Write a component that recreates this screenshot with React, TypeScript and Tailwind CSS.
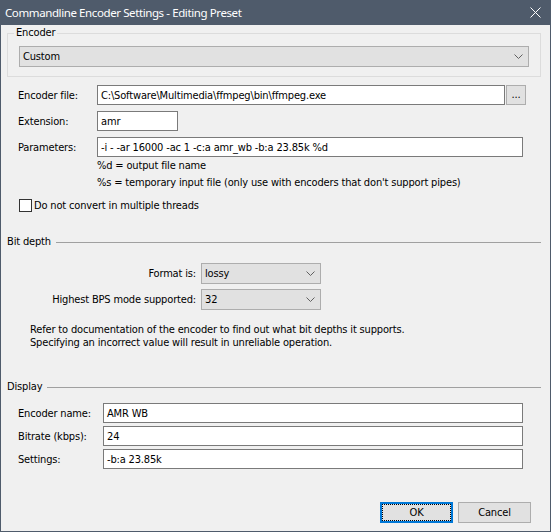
import React from "react";

function Chevron() {
  return (
    <svg width="9" height="5" viewBox="0 0 9 5" className="shrink-0">
      <polyline points="0.5,0.5 4.5,4.5 8.5,0.5" fill="none" stroke="#606060" strokeWidth="1" />
    </svg>
  );
}

function Combo({ value, className }: { value: string; className: string }) {
  return (
    <div className={"h-[21px] bg-[#e1e1e1] border border-[#adadad] flex items-center justify-between pl-[3px] pr-[5px] " + className}>
      <span>{value}</span>
      <Chevron />
    </div>
  );
}

function TextBox({ value, className }: { value: string; className: string }) {
  return (
    <div className={"h-[20px] bg-white border border-[#7a7a7a] flex items-center pl-[3px] whitespace-nowrap overflow-hidden " + className}>
      {value}
    </div>
  );
}

function Separator({ label, className }: { label: string; className: string }) {
  return (
    <div className={"h-[14px] flex items-center pl-[6px] mr-[9px] " + className}>
      <span className="leading-[14px]">{label}</span>
      <div className="flex-1 h-px bg-[#a0a0a0] ml-[5px]" />
    </div>
  );
}

export default function App() {
  return (
    <div className="w-[551px] h-[532px] bg-[#4f5b6b] px-px pb-px flex flex-col font-['DejaVu_Sans_Condensed','Liberation_Sans',sans-serif]">
      <div className="h-[25px] shrink-0 flex items-center justify-between pl-[4px] pr-[9px] text-white text-[11.5px] tracking-[-0.4px] font-['Noto_Sans','Liberation_Sans',sans-serif]">
        <span>Commandline Encoder Settings - Editing Preset</span>
        <svg width="11" height="11" viewBox="0 0 11 11">
          <line x1="0.5" y1="0.5" x2="10.5" y2="10.5" stroke="white" strokeWidth="1" />
          <line x1="10.5" y1="0.5" x2="0.5" y2="10.5" stroke="white" strokeWidth="1" />
        </svg>
      </div>
      <div className="flex-1 bg-[#f0f0f0] flex flex-col text-[11px] tracking-[-0.16px] text-black leading-[13px]">
        <fieldset className="ml-[6px] mt-[1px] w-[534px] border border-[#dcdcdc] p-0 m-0">
          <legend className="ml-[6px] px-[2px] leading-[14px]">Encoder</legend>
          <div className="px-[11px] pt-[6px] pb-[9px]">
            <Combo value="Custom" className="w-full" />
          </div>
        </fieldset>

        <div className="mt-[8px] flex items-center pl-[17px]">
          <span className="w-[79px]">Encoder file:</span>
          <TextBox value="C:\Software\Multimedia\ffmpeg\bin\ffmpeg.exe" className="w-[408px]" />
          <div className="ml-[1px] w-[20px] h-[20px] bg-[#e1e1e1] border border-[#adadad] flex items-center justify-center leading-none pb-[2px]">
            ...
          </div>
        </div>
        <div className="mt-[6px] flex items-center pl-[17px]">
          <span className="w-[79px]">Extension:</span>
          <TextBox value="amr" className="w-[81px]" />
        </div>
        <div className="mt-[6px] flex items-center pl-[17px]">
          <span className="w-[79px]">Parameters:</span>
          <TextBox value="-i - -ar 16000 -ac 1 -c:a amr_wb -b:a 23.85k %d" className="w-[426px]" />
        </div>
        <div className="ml-[96px] flex flex-col">
          <div className="h-[16px] flex items-center">%d = output file name</div>
          <div className="h-[16px] mt-[1px] flex items-center">
            %s = temporary input file (only use with encoders that don't support pipes)
          </div>
        </div>
        <div className="mt-[9px] flex items-center ml-[18px] h-[13px]">
          <div className="w-[13px] h-[13px] bg-white border border-[#333333]" />
          <span className="ml-[2px]">Do not convert in multiple threads</span>
        </div>

        <Separator label="Bit depth" className="mt-[23px]" />

        <div className="mt-[14px] flex items-center">
          <span className="w-[195px] text-right">Format is:</span>
          <Combo value="lossy" className="ml-[5px] w-[120px]" />
        </div>
        <div className="mt-[5px] flex items-center">
          <span className="w-[195px] text-right">Highest BPS mode supported:</span>
          <Combo value="32" className="ml-[5px] w-[120px]" />
        </div>
        <div className="mt-[13px] ml-[29px] flex flex-col">
          <span>Refer to documentation of the encoder to find out what bit depths it supports.</span>
          <span>Specifying an incorrect value will result in unreliable operation.</span>
        </div>

        <Separator label="Display" className="mt-[31px]" />

        <div className="mt-[9px] flex items-center pl-[17px]">
          <span className="w-[85px]">Encoder name:</span>
          <TextBox value="AMR WB" className="w-[420px]" />
        </div>
        <div className="mt-[3px] flex items-center pl-[17px]">
          <span className="w-[85px]">Bitrate (kbps):</span>
          <TextBox value="24" className="w-[420px]" />
        </div>
        <div className="mt-[3px] flex items-center pl-[17px]">
          <span className="w-[85px]">Settings:</span>
          <TextBox value="-b:a 23.85k" className="w-[420px]" />
        </div>

        <div className="mt-[33px] flex justify-end pr-[19px] gap-[5px]">
          <div className="w-[73px] h-[21px] bg-[#e1e1e1] border-2 border-[#0078d7] flex">
            <div className="flex-1 border border-dotted border-black flex items-center justify-center">OK</div>
          </div>
          <div className="w-[73px] h-[21px] bg-[#e1e1e1] border border-[#adadad] flex items-center justify-center">
            Cancel
          </div>
        </div>
      </div>
    </div>
  );
}
